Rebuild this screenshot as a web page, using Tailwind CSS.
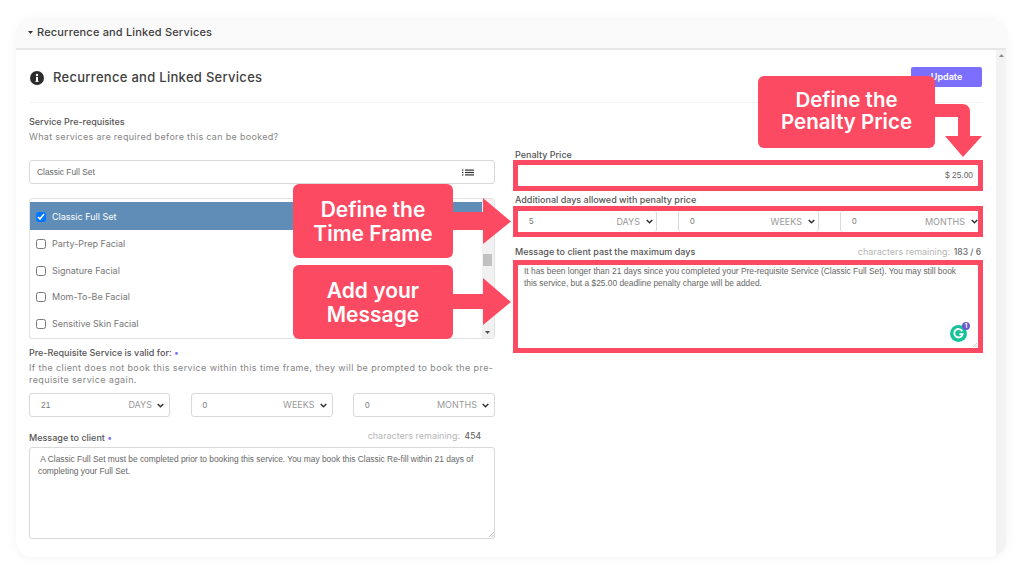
<!DOCTYPE html>
<html lang="en">
<head>
  <meta charset="UTF-8" />
  <title>Recurrence and Linked Services</title>
  <script src="https://cdn.jsdelivr.net/npm/@tailwindcss/browser@4"></script>
</head>
<body class="bg-white h-[574px] w-[1022px] overflow-hidden font-['Inter',sans-serif]">

  <div class="relative ml-4 mt-5 w-[990px] h-[537px] rounded-[16px] bg-[#f3f3f3] shadow-[0_0_12px_rgba(0,0,0,0.05)] overflow-hidden flex flex-col">
    <div class="h-[30px] shrink-0 bg-[#fafafa] border-b-2 border-[#e6e6e6] flex items-center pl-3 pb-[3px] gap-[3px]">
      <svg class="w-[5px] h-[3px]" viewBox="0 0 5 3"><path d="M0 0h5L2.5 3z" fill="#333" /></svg>
      <span class="ml-[1px] text-[11px] font-medium text-[#3d3d3d] tracking-[0.18px]">Recurrence and Linked Services</span>
    </div>

    <div class="flex flex-1">
      <main class="w-[980px] shrink-0 bg-white rounded-br-[4px] pl-[13px] pr-[14px]">
        <div class="h-[53px] border-b border-[#f2f2f2] flex items-center justify-between pt-[2px]">
          <div class="flex items-center gap-[9px] ml-[1px] mt-[2px]">
            <svg class="w-[14px] h-[14px]" viewBox="0 0 14 14">
              <circle cx="7" cy="7" r="7" fill="#2b2b2b" />
              <rect x="6" y="6" width="2" height="4.6" fill="#fff" />
              <rect x="5.400" y="9.800" width="3.200" height="1" fill="#fff" />
              <circle cx="7" cy="4" r="1.200" fill="#fff" />
            </svg>
            <span class="text-[13px] font-medium text-[#3f3f3f] tracking-[0.29px]">Recurrence and Linked Services</span>
          </div>
          <button class="w-[71px] h-[20px] bg-[#7c6fff] rounded-[2px] text-[9px] font-semibold text-white">Update</button>
        </div>

        <div class="flex gap-5">
          <!-- left column -->
          <section class="w-[466px] shrink-0">
            <p class="mt-3 text-[9px] leading-[14px] font-medium text-[#555]">Service Pre-requisites</p>
            <p class="mt-[1px] text-[9px] leading-[14px] text-[#858585] tracking-[0.31px]">What services are required before this can be booked?</p>

            <div class="mt-4 h-6 border border-[#d9d9d9] rounded-[3px] flex items-center justify-between pl-[7px] pr-[20px]">
              <span class="text-[8.4px] text-[#666] font-['Liberation_Sans',sans-serif]">Classic Full Set</span>
              <svg class="w-[12px] h-[7px]" viewBox="0 0 12 7" fill="#333">
                <rect x="0" y="0.500" width="1.400" height="1.200" /><rect x="3" y="0.500" width="9" height="1.200" />
                <rect x="0" y="2.900" width="1.400" height="1.200" /><rect x="3" y="2.900" width="9" height="1.200" />
                <rect x="0" y="5.300" width="1.400" height="1.200" /><rect x="3" y="5.300" width="9" height="1.200" />
              </svg>
            </div>

            <div class="mt-[14px] h-[141px] border border-[#e2e2e2] rounded-[3px] flex overflow-hidden">
              <ul class="flex-1 pt-[3px] text-[9px] text-[#777]">
                <li class="h-[28px] pt-[1px] bg-[#5f8db8] text-white flex items-center pl-[6px] gap-[6px]"><input type="checkbox" checked class="w-[10px] h-[10px] accent-[#0075ff]" />Classic Full Set</li>
                <li class="h-[27px] flex items-center pl-[6px] gap-[6px]"><input type="checkbox" class="w-[10px] h-[10px]" />Party-Prep Facial</li>
                <li class="h-[27px] flex items-center pl-[6px] gap-[6px]"><input type="checkbox" class="w-[10px] h-[10px]" />Signature Facial</li>
                <li class="h-[26px] flex items-center pl-[6px] gap-[6px]"><input type="checkbox" class="w-[10px] h-[10px]" />Mom-To-Be Facial</li>
                <li class="h-[27px] flex items-center pl-[6px] gap-[6px]"><input type="checkbox" class="w-[10px] h-[10px]" />Sensitive Skin Facial</li>
              </ul>
              <div class="w-[12px] bg-[#f1f1f1] relative">
                <div class="absolute left-[1px] top-[55px] w-[9px] h-[12px] bg-[#c1c1c1]"></div>
                <svg class="absolute left-[3px] bottom-[4px] w-[5px] h-[3px]" viewBox="0 0 5 3"><path d="M0 0h5L2.5 3z" fill="#505050" /></svg>
              </div>
            </div>

            <p class="mt-[7px] text-[9px] leading-[14px] font-medium text-[#555]">Pre-Requisite Service is valid for: <span class="text-[#7c6fff]">•</span></p>
            <p class="mt-[2px] text-[9px] leading-[12px] text-[#858585] tracking-[0.39px]">If the client does not book this service within this time frame, they will be prompted to book the pre-requisite service again.</p>

            <div class="mt-[7px] flex justify-between">
              <div class="w-[141px] h-6 border border-[#d9d9d9] rounded-[3px] flex items-center pl-[11px] pr-[3px] text-[#777]">
                <span class="flex-1 text-[8.4px] font-['Liberation_Sans',sans-serif]">21</span>
                <span class="text-[9px] text-[#999]">DAYS</span>
                <svg class="w-[7px] h-[5px] ml-[5px] mr-[2px]" viewBox="0 0 7 5" fill="none" stroke="#333" stroke-width="1.500"><path d="M.7 1l2.8 2.8L6.3 1" /></svg>
              </div>
              <div class="w-[142px] h-6 border border-[#d9d9d9] rounded-[3px] flex items-center pl-[11px] pr-[3px] text-[#777]">
                <span class="flex-1 text-[8.4px] font-['Liberation_Sans',sans-serif]">0</span>
                <span class="text-[9px] text-[#999]">WEEKS</span>
                <svg class="w-[7px] h-[5px] ml-[5px] mr-[2px]" viewBox="0 0 7 5" fill="none" stroke="#333" stroke-width="1.500"><path d="M.7 1l2.8 2.8L6.3 1" /></svg>
              </div>
              <div class="w-[142px] h-6 border border-[#d9d9d9] rounded-[3px] flex items-center pl-[11px] pr-[3px] text-[#777]">
                <span class="flex-1 text-[8.4px] font-['Liberation_Sans',sans-serif]">0</span>
                <span class="text-[9px] text-[#999]">MONTHS</span>
                <svg class="w-[7px] h-[5px] ml-[5px] mr-[2px]" viewBox="0 0 7 5" fill="none" stroke="#333" stroke-width="1.500"><path d="M.7 1l2.8 2.8L6.3 1" /></svg>
              </div>
            </div>

            <div class="mt-3 flex justify-between items-start pr-[14px]">
              <p class="mt-[2px] text-[9px] leading-[14px] font-medium text-[#555]">Message to client <span class="text-[#7c6fff]">•</span></p>
              <p class="text-[9px] leading-[14px] text-[#b5b5b5]">characters remaining: <span class="ml-[2px] text-[8.5px] text-[#666] font-medium">454</span></p>
            </div>
            <div class="relative mt-[2px] h-[92px]">
              <textarea class="block resize-none w-full h-full border border-[#d9d9d9] rounded-[3px] px-2 py-[5px] text-[8.4px] leading-[12px] text-[#666] font-['Liberation_Sans',sans-serif]"> A Classic Full Set must be completed prior to booking this service. You may book this Classic Re-fill within 21 days of completing your Full Set.</textarea>
              <svg class="absolute right-[1px] bottom-[2px] w-[5px] h-[5px]" viewBox="0 0 5 5" stroke="#aaa" stroke-width="0.700"><path d="M0 5L5 0M2.500 5L5 2.500" /></svg>
            </div>
          </section>

          <!-- right column -->
          <section class="w-[466px] shrink-0 pt-[47px]">
            <p class="text-[9px] leading-[10px] font-medium text-[#555]">Penalty Price</p>
            <div class="-mx-[2px] h-[31px] border-[5px] border-[#fb4a61] flex items-center justify-end pr-[5px] text-[8.4px] text-[#666] font-['Liberation_Sans',sans-serif]">$ 25.00</div>

            <p class="mt-1 text-[9px] leading-[10px] font-medium text-[#555]">Additional days allowed with penalty price</p>
            <div class="mt-[1px] -mx-[2px] h-[31px] border-[5px] border-[#fb4a61] flex justify-between text-[#777]">
              <div class="w-[139px] border-r border-[#d9d9d9] rounded-r-[3px] flex items-center pl-[11px] pr-[1px]">
                <span class="flex-1 text-[8.4px] font-['Liberation_Sans',sans-serif]">5</span>
                <span class="text-[9px] text-[#999]">DAYS</span>
                <svg class="w-[7px] h-[5px] ml-[6px] mr-[2px]" viewBox="0 0 7 5" fill="none" stroke="#333" stroke-width="1.500"><path d="M.7 1l2.8 2.8L6.3 1" /></svg>
              </div>
              <div class="w-[141px] border-x border-[#d9d9d9] rounded-[3px] flex items-center pl-[11px] pr-[1px]">
                <span class="flex-1 text-[8.4px] font-['Liberation_Sans',sans-serif]">0</span>
                <span class="text-[9px] text-[#999]">WEEKS</span>
                <svg class="w-[7px] h-[5px] ml-[6px] mr-[2px]" viewBox="0 0 7 5" fill="none" stroke="#333" stroke-width="1.500"><path d="M.7 1l2.8 2.8L6.3 1" /></svg>
              </div>
              <div class="w-[138px] border-l border-[#d9d9d9] rounded-l-[3px] flex items-center pl-[11px]">
                <span class="flex-1 text-[8.4px] font-['Liberation_Sans',sans-serif]">0</span>
                <span class="text-[9px] text-[#999]">MONTHS</span>
                <svg class="w-[7px] h-[5px] ml-[6px]" viewBox="0 0 7 5" fill="none" stroke="#333" stroke-width="1.500"><path d="M.7 1l2.8 2.8L6.3 1" /></svg>
              </div>
            </div>

            <div class="mt-[10px] flex justify-between items-center">
              <p class="text-[9px] leading-[10px] font-medium text-[#555]">Message to client past the maximum days</p>
              <p class="text-[9px] leading-[10px] text-[#b5b5b5]">characters remaining: <span class="ml-[1px] text-[8.5px] text-[#666] font-medium">183 / 6</span></p>
            </div>
            <div class="relative mt-[3px] -mx-[2px] h-[93px] border-[5px] border-[#fb4a61]">
              <textarea class="block resize-none w-full h-full pl-[6px] pr-[16px] py-0 text-[8.4px] leading-[12px] text-[#666] font-['Liberation_Sans',sans-serif]">It has been longer than 21 days since you completed your Pre-requisite Service (Classic Full Set). You may still book this service, but a $25.00 deadline penalty charge will be added.</textarea>
              <svg class="absolute right-[1px] bottom-[1px] w-[4px] h-[4px]" viewBox="0 0 5 5" stroke="#aaa" stroke-width="0.700"><path d="M0 5L5 0M2.500 5L5 2.500" /></svg>
              <!-- grammarly badge -->
              <div class="absolute right-[11px] bottom-[6px] w-[17px] h-[17px] rounded-full bg-[#15c39a] flex items-center justify-center">
                <svg class="w-[11px] h-[11px]" viewBox="0 0 11 11" fill="none" stroke="#fff" stroke-width="1.800"><path d="M9.200 3.200A4.200 4.200 0 1 0 9.600 6.200H6.400" /></svg>
              </div>
              <div class="absolute right-[8px] bottom-[18px] w-[8px] h-[8px] rounded-full bg-[#6a5acd] text-white text-[6px] leading-[8px] text-center font-bold">1</div>
            </div>
          </section>
        </div>
      </main>

      <!-- page scrollbar -->
      <div class="relative w-[10px]">
        <svg class="absolute left-[3px] top-[4px] w-[5px] h-[3px]" viewBox="0 0 5 3"><path d="M0 3h5L2.500 0z" fill="#8a8a8a" /></svg>
      </div>
    </div>

    <!-- callouts -->
    <div class="absolute left-[742px] top-[56px] w-[177px] h-[72px] rounded-[6px] bg-[#fb4a61] flex items-center justify-center pb-[3px] text-center text-white text-[20.500px] leading-[22px] font-semibold">Define the<br />Penalty Price</div>
    <svg class="absolute left-[919px] top-[84px] w-[48px] h-[54px]" viewBox="0 0 48 54">
      <path d="M0 0H27Q35 0 35 8V32H47L28 53L10 32H23V13H0Z" fill="#fb4a61" />
    </svg>

    <div class="absolute left-[277px] top-[164px] w-[160px] h-[74px] rounded-[6px] bg-[#fb4a61] flex items-center justify-center pt-[2px] text-center text-white text-[21px] leading-[24px] font-semibold">Define the<br />Time Frame</div>
    <svg class="absolute left-[437px] top-[178px] w-[58px] h-[46px]" viewBox="0 0 58 46">
      <path d="M0 14H30V0L58 23.500L30 46V32H0Z" fill="#fb4a61" />
    </svg>

    <div class="absolute left-[277px] top-[245px] w-[160px] h-[74px] rounded-[6px] bg-[#fb4a61] flex items-center justify-center pt-[1px] text-center text-white text-[21px] leading-[24px] font-semibold">Add your<br />Message</div>
    <svg class="absolute left-[437px] top-[258px] w-[58px] h-[47px]" viewBox="0 0 58 47">
      <path d="M0 16H30V0L58 24L30 47V31H0Z" fill="#fb4a61" />
    </svg>
  </div>

</body>
</html>
